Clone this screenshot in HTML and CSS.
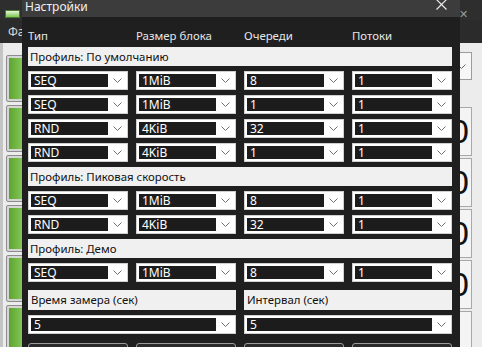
FILE: index.html
```html
<!DOCTYPE html>
<html lang="ru">
<head>
<meta charset="utf-8">
<title>Настройки</title>
<link rel="stylesheet" href="styles.css">
</head>
<body>
<div class="app">
  <div class="app-top">
    <span class="app-icon"></span>
    <span class="app-close">✕</span>
  </div>
  <div class="app-menu">Файл</div>
  <div class="app-main">
    <div class="app-left">
      <div class="gbtn"></div>
      <div class="gbtn"></div>
      <div class="gbtn"></div>
      <div class="gbtn"></div>
      <div class="gbtn"></div>
      <div class="gbtn"></div>
    </div>
    <div class="app-right">
      <div class="app-combo"><svg width="9" height="5" viewBox="0 0 9 5"><path d="M0.5 0.5 L4.5 4.5 L8.5 0.5" fill="none" stroke="#666" stroke-width="1"/></svg></div>
      <div class="cell">0.00</div>
      <div class="cell">0.00</div>
      <div class="cell">0.00</div>
      <div class="cell">0.00</div>
      <div class="cell"></div>
    </div>
  </div>
</div>

<div class="dialog">
  <div class="titlebar">
    <span class="title">Настройки</span>
    <svg class="close" width="11" height="11" viewBox="0 0 11 11"><path d="M0.5 0.5 L10.5 10.5 M10.5 0.5 L0.5 10.5" stroke="#e8e8e8" stroke-width="1.2" fill="none"/></svg>
  </div>
  <div class="dlg-body">
    <div class="grid">
      <div class="hdr">Тип</div>
      <div class="hdr">Размер блока</div>
      <div class="hdr">Очереди</div>
      <div class="hdr">Потоки</div>

      <div class="band">Профиль: По умолчанию</div>

      <div class="combo"><span class="val">SEQ</span><span class="chev"><svg width="9" height="5" viewBox="0 0 9 5"><path d="M0.5 0.5 L4.5 4.5 L8.5 0.5"/></svg></span></div>
      <div class="combo"><span class="val">1MiB</span><span class="chev"><svg width="9" height="5" viewBox="0 0 9 5"><path d="M0.5 0.5 L4.5 4.5 L8.5 0.5"/></svg></span></div>
      <div class="combo"><span class="val">8</span><span class="chev"><svg width="9" height="5" viewBox="0 0 9 5"><path d="M0.5 0.5 L4.5 4.5 L8.5 0.5"/></svg></span></div>
      <div class="combo"><span class="val">1</span><span class="chev"><svg width="9" height="5" viewBox="0 0 9 5"><path d="M0.5 0.5 L4.5 4.5 L8.5 0.5"/></svg></span></div>

      <div class="combo"><span class="val">SEQ</span><span class="chev"><svg width="9" height="5" viewBox="0 0 9 5"><path d="M0.5 0.5 L4.5 4.5 L8.5 0.5"/></svg></span></div>
      <div class="combo"><span class="val">1MiB</span><span class="chev"><svg width="9" height="5" viewBox="0 0 9 5"><path d="M0.5 0.5 L4.5 4.5 L8.5 0.5"/></svg></span></div>
      <div class="combo"><span class="val">1</span><span class="chev"><svg width="9" height="5" viewBox="0 0 9 5"><path d="M0.5 0.5 L4.5 4.5 L8.5 0.5"/></svg></span></div>
      <div class="combo"><span class="val">1</span><span class="chev"><svg width="9" height="5" viewBox="0 0 9 5"><path d="M0.5 0.5 L4.5 4.5 L8.5 0.5"/></svg></span></div>

      <div class="combo"><span class="val">RND</span><span class="chev"><svg width="9" height="5" viewBox="0 0 9 5"><path d="M0.5 0.5 L4.5 4.5 L8.5 0.5"/></svg></span></div>
      <div class="combo"><span class="val">4KiB</span><span class="chev"><svg width="9" height="5" viewBox="0 0 9 5"><path d="M0.5 0.5 L4.5 4.5 L8.5 0.5"/></svg></span></div>
      <div class="combo"><span class="val">32</span><span class="chev"><svg width="9" height="5" viewBox="0 0 9 5"><path d="M0.5 0.5 L4.5 4.5 L8.5 0.5"/></svg></span></div>
      <div class="combo"><span class="val">1</span><span class="chev"><svg width="9" height="5" viewBox="0 0 9 5"><path d="M0.5 0.5 L4.5 4.5 L8.5 0.5"/></svg></span></div>

      <div class="combo"><span class="val">RND</span><span class="chev"><svg width="9" height="5" viewBox="0 0 9 5"><path d="M0.5 0.5 L4.5 4.5 L8.5 0.5"/></svg></span></div>
      <div class="combo"><span class="val">4KiB</span><span class="chev"><svg width="9" height="5" viewBox="0 0 9 5"><path d="M0.5 0.5 L4.5 4.5 L8.5 0.5"/></svg></span></div>
      <div class="combo"><span class="val">1</span><span class="chev"><svg width="9" height="5" viewBox="0 0 9 5"><path d="M0.5 0.5 L4.5 4.5 L8.5 0.5"/></svg></span></div>
      <div class="combo"><span class="val">1</span><span class="chev"><svg width="9" height="5" viewBox="0 0 9 5"><path d="M0.5 0.5 L4.5 4.5 L8.5 0.5"/></svg></span></div>

      <div class="band">Профиль: Пиковая скорость</div>

      <div class="combo"><span class="val">SEQ</span><span class="chev"><svg width="9" height="5" viewBox="0 0 9 5"><path d="M0.5 0.5 L4.5 4.5 L8.5 0.5"/></svg></span></div>
      <div class="combo"><span class="val">1MiB</span><span class="chev"><svg width="9" height="5" viewBox="0 0 9 5"><path d="M0.5 0.5 L4.5 4.5 L8.5 0.5"/></svg></span></div>
      <div class="combo"><span class="val">8</span><span class="chev"><svg width="9" height="5" viewBox="0 0 9 5"><path d="M0.5 0.5 L4.5 4.5 L8.5 0.5"/></svg></span></div>
      <div class="combo"><span class="val">1</span><span class="chev"><svg width="9" height="5" viewBox="0 0 9 5"><path d="M0.5 0.5 L4.5 4.5 L8.5 0.5"/></svg></span></div>

      <div class="combo"><span class="val">RND</span><span class="chev"><svg width="9" height="5" viewBox="0 0 9 5"><path d="M0.5 0.5 L4.5 4.5 L8.5 0.5"/></svg></span></div>
      <div class="combo"><span class="val">4KiB</span><span class="chev"><svg width="9" height="5" viewBox="0 0 9 5"><path d="M0.5 0.5 L4.5 4.5 L8.5 0.5"/></svg></span></div>
      <div class="combo"><span class="val">32</span><span class="chev"><svg width="9" height="5" viewBox="0 0 9 5"><path d="M0.5 0.5 L4.5 4.5 L8.5 0.5"/></svg></span></div>
      <div class="combo"><span class="val">1</span><span class="chev"><svg width="9" height="5" viewBox="0 0 9 5"><path d="M0.5 0.5 L4.5 4.5 L8.5 0.5"/></svg></span></div>

      <div class="band">Профиль: Демо</div>

      <div class="combo"><span class="val">SEQ</span><span class="chev"><svg width="9" height="5" viewBox="0 0 9 5"><path d="M0.5 0.5 L4.5 4.5 L8.5 0.5"/></svg></span></div>
      <div class="combo"><span class="val">1MiB</span><span class="chev"><svg width="9" height="5" viewBox="0 0 9 5"><path d="M0.5 0.5 L4.5 4.5 L8.5 0.5"/></svg></span></div>
      <div class="combo"><span class="val">8</span><span class="chev"><svg width="9" height="5" viewBox="0 0 9 5"><path d="M0.5 0.5 L4.5 4.5 L8.5 0.5"/></svg></span></div>
      <div class="combo"><span class="val">1</span><span class="chev"><svg width="9" height="5" viewBox="0 0 9 5"><path d="M0.5 0.5 L4.5 4.5 L8.5 0.5"/></svg></span></div>

      <div class="label half">Время замера (сек)</div>
      <div class="label half">Интервал (сек)</div>

      <div class="combo half"><span class="val">5</span><span class="chev"><svg width="9" height="5" viewBox="0 0 9 5"><path d="M0.5 0.5 L4.5 4.5 L8.5 0.5"/></svg></span></div>
      <div class="combo half"><span class="val">5</span><span class="chev"><svg width="9" height="5" viewBox="0 0 9 5"><path d="M0.5 0.5 L4.5 4.5 L8.5 0.5"/></svg></span></div>

      <div class="btn"></div>
      <div class="btn"></div>
      <div class="btn"></div>
      <div class="btn"></div>
    </div>
  </div>
</div>
</body>
</html>
```

FILE: styles.css
```css
html, body {
  margin: 0;
  padding: 0;
  width: 482px;
  height: 347px;
  overflow: hidden;
  font-family: "Noto Sans", "Open Sans", sans-serif;
  font-size: 11.4px;
}

body {
  position: relative;
}

/* background application window */
.app {
  width: 482px;
  height: 347px;
  background: #ececec;
  display: flex;
  flex-direction: column;
}

.app-top {
  height: 20px;
  flex: none;
  background: #2e2e2e;
  display: flex;
  align-items: center;
  justify-content: space-between;
  padding: 0 14px 0 5px;
}

.app-icon {
  width: 13px;
  height: 6px;
  margin-top: 7px;
  background: linear-gradient(#e6f7da, #7cc64f);
  border: 1px solid #4a7a2e;
}

.app-close {
  color: #9a9a9a;
  font-size: 11px;
  margin-top: 6px;
}

.app-menu {
  height: 23px;
  flex: none;
  line-height: 23px;
  background: #2b2b2b;
  color: #dcdcdc;
  padding-left: 8px;
  font-size: 12px;
}

.app-main {
  flex: 1;
  display: flex;
  gap: 10px;
  padding: 9px 10px 0 3px;
  border-left: 3px solid #c4c4c4;
}

.app-left {
  width: 70px;
  display: flex;
  flex-direction: column;
  gap: 3px;
  padding-top: 3px;
}

.gbtn {
  height: 47px;
  flex: none;
  box-sizing: border-box;
  border: 1px solid #8d8d8d;
  border-radius: 2px;
  padding: 2px;
  background: linear-gradient(90deg, #5da52f, #a9e27e 40%, #73c042) content-box, #d6d6d6;
}

.app-right {
  flex: 1;
  display: flex;
  flex-direction: column;
  gap: 2px;
}

.app-combo {
  height: 26px;
  flex: none;
  border: 1px solid #9c9c9c;
  background: #f7f7f7;
  display: flex;
  align-items: center;
  justify-content: flex-end;
  padding-right: 5px;
  margin-bottom: 25px;
}

.cell {
  height: 47px;
  flex: none;
  border: 1px solid #a8a8a8;
  background: #f4f4f4;
  text-align: right;
  padding-right: 2px;
  font-family: "Liberation Sans", sans-serif;
  font-size: 34px;
  line-height: 47px;
  color: #111;
}

/* settings dialog */
.dialog {
  position: absolute;
  left: 22px;
  top: 0;
  width: 438px;
  height: 380px;
  background: #1f1f1f;
  display: flex;
  flex-direction: column;
}

.titlebar {
  height: 17px;
  flex: none;
  background: #3c3c3c;
  display: flex;
  align-items: flex-start;
  justify-content: space-between;
  padding: 0 13px 0 3px;
}

.title {
  color: #f2f2f2;
  font-size: 12px;
  line-height: 14px;
}

.close {
  margin-top: -1px;
}

.dlg-body {
  padding: 10px 8px 0 6px;
}

.grid {
  display: grid;
  grid-template-columns: repeat(4, 1fr);
  column-gap: 8px;
  row-gap: 5px;
}

.hdr {
  height: 15px;
  line-height: 17px;
  color: #e6e6e6;
}

.band {
  grid-column: 1 / -1;
  height: 19px;
  line-height: 19px;
  background: #f0f0f0;
  color: #111;
  padding-left: 2px;
}

.label {
  height: 20px;
  line-height: 20px;
  background: #f0f0f0;
  color: #111;
  padding-left: 3px;
  margin-top: 3px;
}

.half {
  grid-column: span 2;
}

.combo {
  height: 19px;
  box-sizing: border-box;
  background: #ffffff;
  border: 1px solid #d0d0d0;
  padding: 2px 0 2px 2px;
  display: flex;
}

.val {
  flex: 1;
  background: #1c1c1c;
  color: #ffffff;
  padding-left: 3px;
  line-height: 13px;
  font-size: 12px;
}

.chev {
  width: 19px;
  display: flex;
  align-items: center;
  justify-content: center;
}

.chev svg path {
  fill: none;
  stroke: #707070;
  stroke-width: 1;
}

.btn {
  height: 20px;
  margin-top: 4px;
  border: 1px solid #9a9a9a;
  border-radius: 3px;
  background: #2a2a2a;
}
```
